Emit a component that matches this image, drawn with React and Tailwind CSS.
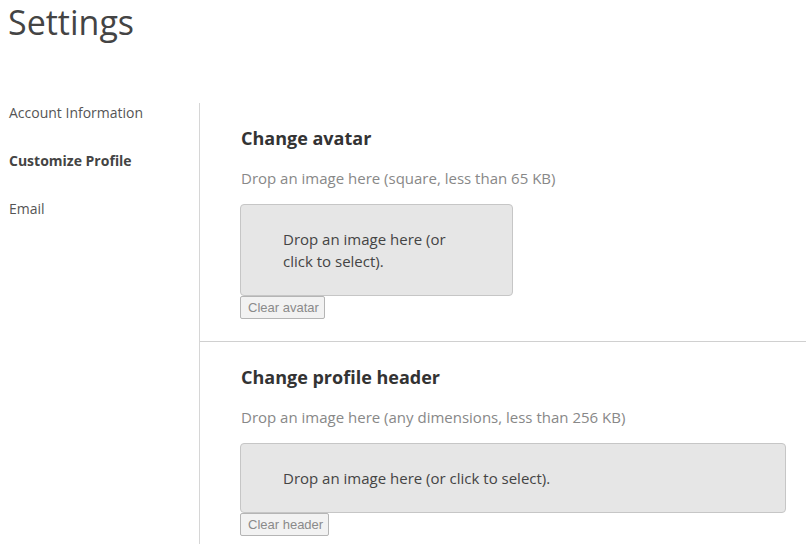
import React from 'react';

const Dropzone = ({ className, children }) => (
  <div
    className={`rounded-[4px] border border-[#c6c6c6] bg-[#e6e6e6] px-[42px] py-[23px] text-[15px] leading-[22px] text-[#444] ${className}`}
  >
    {children}
  </div>
);

const ClearButton = ({ children }) => (
  <button
    type="button"
    disabled
    className="block h-[23px] rounded-[2px] border border-[#b5b5b5] bg-[#f2f2f2] pl-[7px] pr-[5px] font-['Liberation_Sans',Arial,sans-serif] text-[13px] leading-[20px] text-[#8a8a8a]"
  >
    {children}
  </button>
);

const App = () => {
  return (
    <div className="min-h-[544px] w-[806px] bg-white font-['Open_Sans',sans-serif]">
      <h1 className="pl-[8px] text-[34px] leading-[44px] font-normal text-[#444]">
        Settings
      </h1>
      <div className="mt-[59px] flex">
        <nav className="flex w-[199px] shrink-0 flex-col gap-[28px] pl-[9px] text-[14px] leading-[20px] text-[#555]">
          <a href="#">Account Information</a>
          <a href="#" className="font-bold text-[#444]">Customize Profile</a>
          <a href="#">Email</a>
        </nav>
        <main className="min-h-[441px] flex-1 border-l border-[#d6d6d6]">
          <section className="pb-[22px] pl-[40px] pr-[20px] pt-[23px]">
            <h2 className="pl-px text-[18px] leading-[24px] font-bold text-[#333]">Change avatar</h2>
            <p className="mt-[17px] pl-px text-[15px] leading-[22px] text-[#888]">
              Drop an image here (square, less than 65 KB)
            </p>
            <Dropzone className="mt-[15px] w-[273px]">
              Drop an image here (or click to select).
            </Dropzone>
            <ClearButton>Clear avatar</ClearButton>
          </section>
          <hr className="border-[#d0d0d0]" />
          <section className="pb-[10px] pl-[40px] pr-[20px] pt-[23px]">
            <h2 className="pl-px text-[18px] leading-[24px] font-bold text-[#333]">Change profile header</h2>
            <p className="mt-[17px] pl-px text-[15px] leading-[22px] text-[#888]">
              Drop an image here (any dimensions, less than 256 KB)
            </p>
            <Dropzone className="mt-[15px]">
              Drop an image here (or click to select).
            </Dropzone>
            <ClearButton>Clear header</ClearButton>
          </section>
        </main>
      </div>
    </div>
  );
};

export default App;
